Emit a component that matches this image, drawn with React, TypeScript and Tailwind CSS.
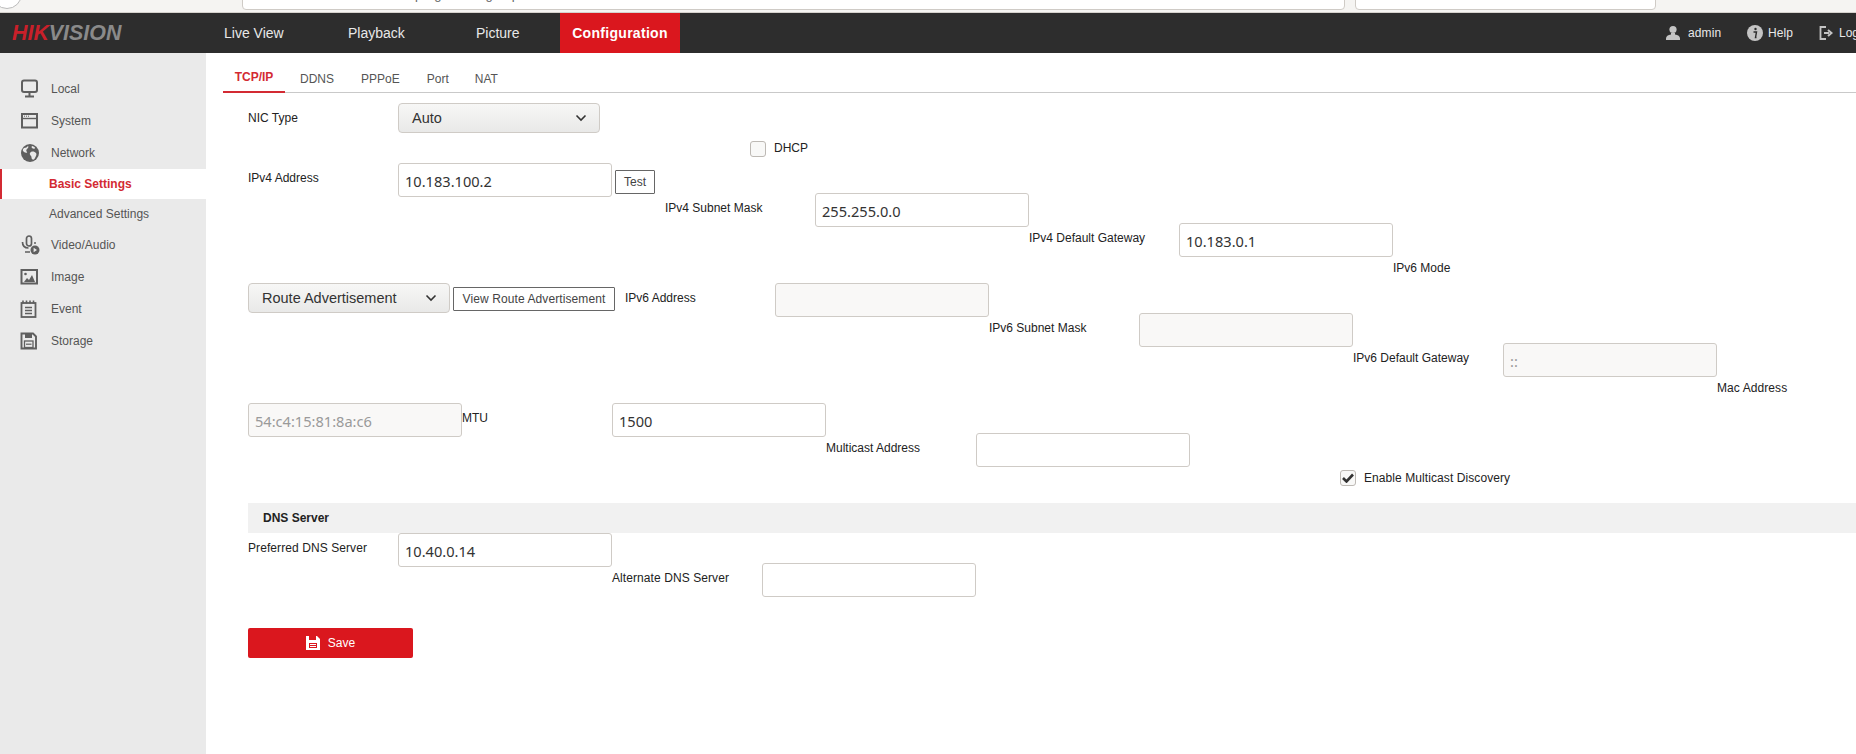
import React from "react";

const sans = "font-['Liberation_Sans',Arial,sans-serif]";

function Label({ children, w = "w-[150px]", wide = false }: { children: React.ReactNode; w?: string; wide?: boolean }) {
  return <div className={`${w} shrink-0 text-[12px] leading-[30px] text-[#222] whitespace-nowrap ${wide ? "tracking-[0.08px]" : ""}`}>{children}</div>;
}

function Input({ value = "", disabled = false }: { value?: string; disabled?: boolean }) {
  return (
    <div
      className={`w-[214px] h-[34px] shrink-0 rounded-[3px] border border-[#cfcbc6] px-[6px] font-['Noto_Sans',sans-serif] text-[14.6px] leading-[34px] ${
        disabled ? "bg-[#f9f8f7] text-[#9a9a9a]" : "bg-white text-[#333]"
      }`}
    >
      {value}
    </div>
  );
}

function Select({ value }: { value: string }) {
  return (
    <div className="w-[202px] h-[30px] shrink-0 flex items-center justify-between rounded-[4px] border border-[#cfcbc6] bg-gradient-to-b from-[#f7f7f6] to-[#e9e9e8] pl-[13px] pr-[12px] text-[14.5px] text-[#333]">
      <span className="pt-[1px]">{value}</span>
      <svg width="12" height="8" viewBox="0 0 12 8" fill="none" stroke="#333" strokeWidth="1.6"><path d="M1.5 1.5 6 6l4.5-4.5" /></svg>
    </div>
  );
}

function Btn({ children, className }: { children: React.ReactNode; className: string }) {
  return (
    <div className={`${className} h-[24px] shrink-0 border border-[#666] rounded-[1px] bg-white text-[12px] leading-[22px] text-center text-[#444] whitespace-nowrap`}>
      {children}
    </div>
  );
}

const Row = ({ className = "", children }: { className?: string; children?: React.ReactNode }) => (
  <div className={`flex items-start h-[30px] ${className}`}>{children}</div>
);

function Icon({ name }: { name: string }) {
  const c = "#5f5f5f";
  const common = { width: 20, height: 20, viewBox: "0 0 20 20" };
  switch (name) {
    case "local":
      return <svg {...common} fill="none"><rect x="2" y="1.5" width="15" height="11.5" rx="2" stroke={c} strokeWidth="2" /><path d="M9.500 14v3M5 17.500h9" stroke={c} strokeWidth="2" /></svg>;
    case "system":
      return <svg {...common} fill="none"><rect x="2" y="3" width="15" height="13.500" stroke={c} strokeWidth="2" /><path d="M2 7.500h15" stroke={c} strokeWidth="1.400" /><path d="M4 5.200h5" stroke={c} strokeWidth="1" strokeDasharray="1 1" /></svg>;
    case "network":
      return <svg {...common}><circle cx="10" cy="10" r="9" fill={c} /><path d="M4 5c2 0 3-1 4-2 1 1 0 2-1 3s-1 2 0 3-2 1-3 0-2-2 0-4ZM11 9c2-1 4 0 5 1s0 3-1 5-2 2-3 1 0-2-1-3-2-3 0-4ZM12 3c1 0 3 1 3 2s-2 1-3 0 0-2 0-2Z" fill="#eaeaea" /></svg>;
    case "video":
      return <svg {...common} fill="none"><rect x="6.500" y="1" width="5" height="10" rx="2.500" stroke={c} strokeWidth="1.700" /><path d="M2.500 7c0 4 2 6 6 6M5 17h5" stroke={c} strokeWidth="1.700" /><circle cx="15" cy="15" r="4.500" fill={c} /><path d="M13.600 12.800v4.400l3.400-2.200Z" fill="#eaeaea" /><circle cx="15" cy="8" r="1" fill={c} /></svg>;
    case "image":
      return <svg {...common} fill="none"><rect x="1.500" y="3" width="15.500" height="13.500" stroke={c} strokeWidth="2" /><circle cx="5.500" cy="7" r="1.300" fill={c} /><path d="M4 15l3-4 2 2 3-5 3 7Z" fill={c} /></svg>;
    case "event":
      return <svg {...common} fill="none"><rect x="1.500" y="4" width="14" height="14" stroke={c} strokeWidth="1.800" /><path d="M3 1.500v3M6.500 1.500v3M10 1.500v3M13.500 1.500v3" stroke={c} strokeWidth="1.600" /><path d="M5 8.500h7M5 11.500h7M5 14.500h7" stroke={c} strokeWidth="1.300" /></svg>;
    default:
      return <svg {...common} fill="none"><path d="M1.500 2.500h11.500l3 3v12H1.500Z" stroke={c} strokeWidth="1.900" /><rect x="5" y="2.500" width="7" height="4.500" fill={c} /><rect x="4.500" y="10" width="8.500" height="6.500" stroke={c} strokeWidth="1.300" /><path d="M6 13.200h5.500" stroke={c} strokeWidth="1.200" /></svg>;
  }
}

function NavItem({ icon, label }: { icon: string; label: string }) {
  return (
    <div className="flex items-center h-[32px] pl-[20px] text-[12px] text-[#555]">
      <span className="w-[31px] shrink-0"><Icon name={icon} /></span>
      {label}
    </div>
  );
}

export default function App() {
  return (
    <div className={`${sans} w-[1856px] h-[754px] overflow-hidden bg-white flex flex-col`}>
      <div className="h-[13px] shrink-0 bg-[#f5f4f2] border-b border-[#d5d2cd] flex items-end overflow-hidden">
        <div className="ml-[-8px] w-[30px] h-[30px] shrink-0 rounded-full border border-[#bbb] bg-white mb-[3px]" />
        <div className="ml-[220px] w-[1103px] h-[20px] shrink-0 rounded-b-[4px] border border-[#cfcbc6] bg-white mb-[2px] overflow-hidden flex items-start text-[13px] leading-[14px] text-[#666]">
          <span className="ml-[172px] mt-[-3px]">p</span>
          <span className="ml-[12px] mt-[-3px]">g</span>
          <span className="ml-[44px] mt-[-3px]">g</span>
          <span className="ml-[19px] mt-[-3px]">p</span>
        </div>
        <div className="ml-[10px] w-[301px] h-[20px] shrink-0 rounded-b-[4px] border border-[#cfcbc6] bg-white mb-[2px]" />
      </div>

      <div className="h-[40px] shrink-0 bg-[#2d2d2d] flex items-stretch text-[14px] text-[#e8e8e8]">
        <div className="w-[224px] shrink-0 pl-[12px] flex items-center text-[21.4px] italic font-bold">
          <span className="text-[#c9202a]">HIK</span>
          <span className="text-[#8a8a8a]">VISION</span>
        </div>
        <div className="w-[124px] shrink-0 flex items-center">Live View</div>
        <div className="w-[128px] shrink-0 flex items-center">Playback</div>
        <div className="w-[84px] shrink-0 flex items-center">Picture</div>
        <div className="w-[120px] shrink-0 bg-[#da171e] text-white font-bold tracking-[0.3px] flex items-center justify-center">Configuration</div>
        <div className="flex-1" />
        <div className="flex items-center text-[12px] w-[154px] shrink-0 tracking-[0.1px]">
          <svg width="16" height="16" viewBox="0 0 16 16" fill="#c4c4c4" className="mr-[7px] shrink-0"><circle cx="8" cy="4.500" r="3.600" /><path d="M6 8h4v1.500c3 .8 5 1.500 5 4V15H1v-1.500c0-2.500 2-3.200 5-4Z" /></svg>
          <span className="w-[59px] shrink-0">admin</span>
          <svg width="16" height="16" viewBox="0 0 16 16" className="mr-[5px] shrink-0"><circle cx="8" cy="8" r="8" fill="#c4c4c4" /><circle cx="8.500" cy="4" r="1.200" fill="#2d2d2d" /><path d="M6.500 7h3l-1 5.500h1" stroke="#2d2d2d" strokeWidth="1.400" fill="none" /></svg>
          <span>Help</span>
        </div>
        <div className="flex items-center text-[12px] w-[37px] shrink-0 overflow-hidden whitespace-nowrap">
          <svg width="14" height="14" viewBox="0 0 14 14" fill="none" className="mr-[6px] shrink-0"><path d="M7 1H1.500v12H7" stroke="#c4c4c4" strokeWidth="1.800" /><path d="M5 7h5M9 4l3.500 3L9 10" stroke="#c4c4c4" strokeWidth="2" /></svg>
          Logout
        </div>
      </div>

      <div className="flex-1 flex min-h-0">
        <div className="w-[206px] shrink-0 bg-[#eaeaea] pt-[20px]">
          <NavItem icon="local" label="Local" />
          <NavItem icon="system" label="System" />
          <NavItem icon="network" label="Network" />
          <div className="h-[30px] bg-white border-l-2 border-[#d32a33] pl-[47px] text-[12px] font-bold leading-[30px] text-[#d32a33]">Basic Settings</div>
          <div className="h-[30px] pl-[49px] text-[12px] leading-[30px] text-[#555]">Advanced Settings</div>
          <NavItem icon="video" label="Video/Audio" />
          <NavItem icon="image" label="Image" />
          <NavItem icon="event" label="Event" />
          <NavItem icon="storage" label="Storage" />
        </div>

        <div className="flex-1 min-w-0">
          <div className="h-[40px] ml-[17px] border-b border-[#c9c9c9] flex items-end text-[12px] text-[#555]">
            <div className="w-[62px] h-[26px] border-b-2 border-[#d32a33] -mb-px text-center font-bold text-[#d32a33] leading-[20px]">TCP/IP</div>
            <div className="ml-[15px] h-[26px] leading-[26px]">DDNS</div>
            <div className="ml-[27px] h-[26px] leading-[26px]">PPPoE</div>
            <div className="ml-[27px] h-[26px] leading-[26px]">Port</div>
            <div className="ml-[26px] h-[26px] leading-[26px]">NAT</div>
          </div>

          <div className="pl-[42px] pt-[10px]">
            <Row>
              <Label>NIC Type</Label>
              <Select value="Auto" />
            </Row>
            <Row className="pl-[502px] text-[12px]">
              <span className="w-[16px] h-[16px] mt-[8px] rounded-[3px] border border-[#bdb9b4] bg-[#f8f8f7]" />
              <span className="ml-[8px] leading-[30px] text-[#222]">DHCP</span>
            </Row>
            <Row>
              <Label>IPv4 Address</Label>
              <Input value="10.183.100.2" />
              <Btn className="ml-[3px] mt-[7px] w-[40px]">Test</Btn>
            </Row>
            <Row className="pl-[417px]">
              <Label>IPv4 Subnet Mask</Label>
              <Input value="255.255.0.0" />
            </Row>
            <Row className="pl-[781px]">
              <Label>IPv4 Default Gateway</Label>
              <Input value="10.183.0.1" />
            </Row>
            <Row className="pl-[1145px]">
              <Label>IPv6 Mode</Label>
            </Row>
            <Row>
              <Select value="Route Advertisement" />
              <Btn className="ml-[3px] mt-[4px] w-[162px] tracking-[0.1px]">View Route Advertisement</Btn>
              <Label w="ml-[10px] w-[150px]">IPv6 Address</Label>
              <Input disabled />
            </Row>
            <Row className="pl-[741px]">
              <Label>IPv6 Subnet Mask</Label>
              <Input disabled />
            </Row>
            <Row className="pl-[1105px]">
              <Label>IPv6 Default Gateway</Label>
              <Input disabled value="::" />
            </Row>
            <Row className="pl-[1469px]">
              <Label wide>Mac Address</Label>
            </Row>
            <Row>
              <Input disabled value="54:c4:15:81:8a:c6" />
              <Label>MTU</Label>
              <Input value="1500" />
            </Row>
            <Row className="pl-[578px]">
              <Label>Multicast Address</Label>
              <Input />
            </Row>
            <Row className="pl-[1092px] text-[12px]">
              <span className="w-[16px] h-[16px] mt-[7px] rounded-[3px] border border-[#bdb9b4] bg-[#f8f8f7] flex items-center justify-center">
                <svg width="12" height="10" viewBox="0 0 12 10" fill="none" stroke="#333" strokeWidth="2.600"><path d="M1 5l3.500 3.500L11 1.500" /></svg>
              </span>
              <span className="ml-[8px] leading-[30px] text-[#222] tracking-[0.08px]">Enable Multicast Discovery</span>
            </Row>
            <div className="h-[30px] mt-[10px] bg-[#f1f1f1] pl-[15px] text-[12px] font-bold leading-[30px] text-[#222]">DNS Server</div>
            <Row>
              <Label wide>Preferred DNS Server</Label>
              <Input value="10.40.0.14" />
            </Row>
            <Row className="pl-[364px]">
              <Label wide>Alternate DNS Server</Label>
              <Input />
            </Row>
            <div className="mt-[35px] w-[165px] h-[30px] rounded-[2px] bg-[#da171e] text-white text-[12px] flex items-center justify-center gap-[8px]">
              <svg width="14" height="14" viewBox="0 0 14 14"><path d="M0 0h11l3 3v11H0Z" fill="#fff" /><rect x="3" y="0" width="7" height="4" fill="#da171e" /><rect x="3" y="7" width="8" height="5" fill="#da171e" /><path d="M4 8.500h6M4 10.500h6" stroke="#fff" /></svg>
              Save
            </div>
          </div>
        </div>
      </div>
    </div>
  );
}
